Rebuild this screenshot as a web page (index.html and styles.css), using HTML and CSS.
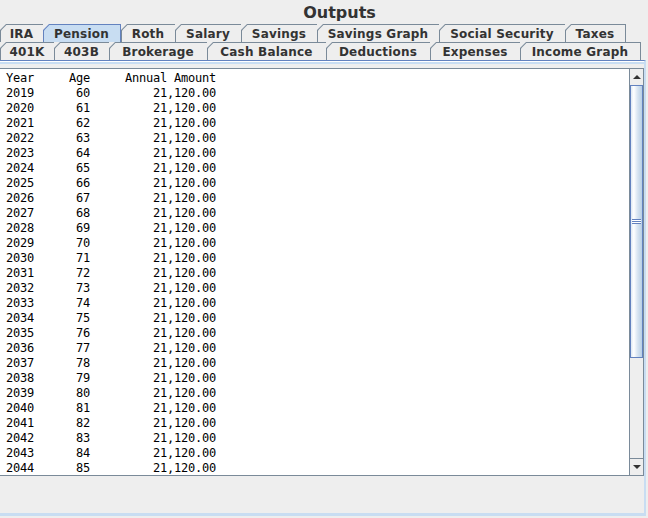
FILE: index.html
```html
<!DOCTYPE html>
<html>
<head>
<meta charset="utf-8">
<link rel="stylesheet" href="styles.css">
</head>
<body>
<div class="frame">
  <div class="title">Outputs</div>
  <div class="tabrow row1">
    <div class="tab"><div class="tab-in">IRA</div></div>
    <div class="tab sel"><div class="tab-in">Pension</div></div>
    <div class="tab"><div class="tab-in">Roth</div></div>
    <div class="tab"><div class="tab-in">Salary</div></div>
    <div class="tab"><div class="tab-in">Savings</div></div>
    <div class="tab"><div class="tab-in">Savings Graph</div></div>
    <div class="tab"><div class="tab-in">Social Security</div></div>
    <div class="tab last"><div class="tab-in">Taxes</div></div>
  </div>
  <div class="tabrow row2">
    <div class="tab"><div class="tab-in">401K</div></div>
    <div class="tab"><div class="tab-in">403B</div></div>
    <div class="tab"><div class="tab-in">Brokerage</div></div>
    <div class="tab"><div class="tab-in">Cash Balance</div></div>
    <div class="tab"><div class="tab-in">Deductions</div></div>
    <div class="tab"><div class="tab-in">Expenses</div></div>
    <div class="tab last"><div class="tab-in">Income Graph</div></div>
  </div>
  <div class="content">
    <div class="band"></div>
    <div class="body">
      <div class="scrollpane">
        <pre class="text">Year     Age     Annual Amount
2019      60         21,120.00
2020      61         21,120.00
2021      62         21,120.00
2022      63         21,120.00
2023      64         21,120.00
2024      65         21,120.00
2025      66         21,120.00
2026      67         21,120.00
2027      68         21,120.00
2028      69         21,120.00
2029      70         21,120.00
2030      71         21,120.00
2031      72         21,120.00
2032      73         21,120.00
2033      74         21,120.00
2034      75         21,120.00
2035      76         21,120.00
2036      77         21,120.00
2037      78         21,120.00
2038      79         21,120.00
2039      80         21,120.00
2040      81         21,120.00
2041      82         21,120.00
2042      83         21,120.00
2043      84         21,120.00
2044      85         21,120.00</pre>
        <div class="vbar">
          <div class="btn up"><svg width="13" height="16" viewBox="0 0 13 16"><polygon points="3,10 11,10 7,6" fill="#333"/></svg></div>
          <div class="track">
            <div class="thumb"><div class="grip"></div></div>
          </div>
          <div class="btn down"><svg width="13" height="16" viewBox="0 0 13 16"><polygon points="3,6 11,6 7,10" fill="#333"/></svg></div>
        </div>
      </div>
      <div class="south"></div>
    </div>
  </div>
</div>
</body>
</html>
```
FILE: styles.css
```css
html, body {
  margin: 0;
  padding: 0;
  background: #eeeeee;
}
.frame {
  width: 648px;
  height: 518px;
  background: #eeeeee;
  display: flex;
  flex-direction: column;
  overflow: hidden;
}
.title {
  height: 23px;
  padding-top: 1px;
  line-height: 24px;
  font-family: "DejaVu Sans", sans-serif;
  font-weight: bold;
  font-size: 16px;
  color: #333333;
  text-align: center;
  padding-left: 31px;
  flex: none;
  overflow: hidden;
}
.tabrow {
  display: grid;
  height: 18px;
  flex: none;
}
.row1 {
  grid-template-columns: 43px 78px 54px 66px 76px 122px 126px 61px;
}
.row2 {
  grid-template-columns: 54px 55px 98px 119px 104px 90px 121px;
}
.tab {
  background: #7a8a99;
  padding: 1px 0 0 1px;
  clip-path: polygon(6px 0, 100% 0, 100% 100%, 0 100%, 0 6px);
}
.tab.last {
  padding-right: 1px;
}
.tab.sel {
  background: #6382bf;
  padding-right: 1px;
}
.tab-in {
  height: 17px;
  line-height: 18px;
  background: #eeeeee;
  clip-path: polygon(5.4px 0, 100% 0, 100% 100%, 0 100%, 0 5.4px);
  font-family: "DejaVu Sans", sans-serif;
  font-weight: bold;
  font-size: 12px;
  letter-spacing: 0.2px;
  color: #333333;
  text-align: center;
  padding-right: 1px;
  white-space: nowrap;
}
.tab.sel .tab-in {
  background: #c8ddf2;
}
.content {
  flex: 1;
  display: flex;
  flex-direction: column;
  border-top: 1px solid #6382bf;
  border-right: 2px solid #c8ddf2;
  border-bottom: 3px solid #c8ddf2;
  margin-right: 2px;
  margin-bottom: 2px;
}
.band {
  height: 3px;
  flex: none;
  background: linear-gradient(#ffffff 0 1px, #c8ddf2 1px);
}
.body {
  flex: 1;
  display: flex;
  flex-direction: column;
  padding-top: 4px;
}
.scrollpane {
  height: 406px;
  flex: none;
  display: flex;
  border-top: 1px solid #7a8a99;
  border-bottom: 1px solid #7a8a99;
  border-right: 1px solid #7a8a99;
}
.text {
  flex: 1;
  margin: 0;
  padding: 2px 0 0 6px;
  background: #ffffff;
  font-family: "DejaVu Sans Mono", monospace;
  font-size: 12px;
  letter-spacing: -0.225px;
  line-height: 15px;
  color: #000000;
}
.vbar {
  width: 13px;
  flex: none;
  border-left: 1px solid #7a8a99;
  display: flex;
  flex-direction: column;
  background: #eeeeee;
}
.btn {
  height: 16px;
  flex: none;
  display: flex;
}
.btn.down {
  border-top: 1px solid #7a8a99;
}
.track {
  flex: 1;
  display: flex;
  flex-direction: column;
}
.thumb {
  height: 271px;
  flex: none;
  border: 1px solid #6382bf;
  background: linear-gradient(to right, #dde8f3 0%, #ffffff 25%, #dde8f3 55%, #b8cfe5 100%);
  display: flex;
  align-items: center;
  justify-content: center;
}
.grip {
  width: 9px;
  height: 5px;
  background: repeating-linear-gradient(#6382bf 0 1px, #ffffff 1px 2px);
}
.south {
  flex: 1;
}
```
